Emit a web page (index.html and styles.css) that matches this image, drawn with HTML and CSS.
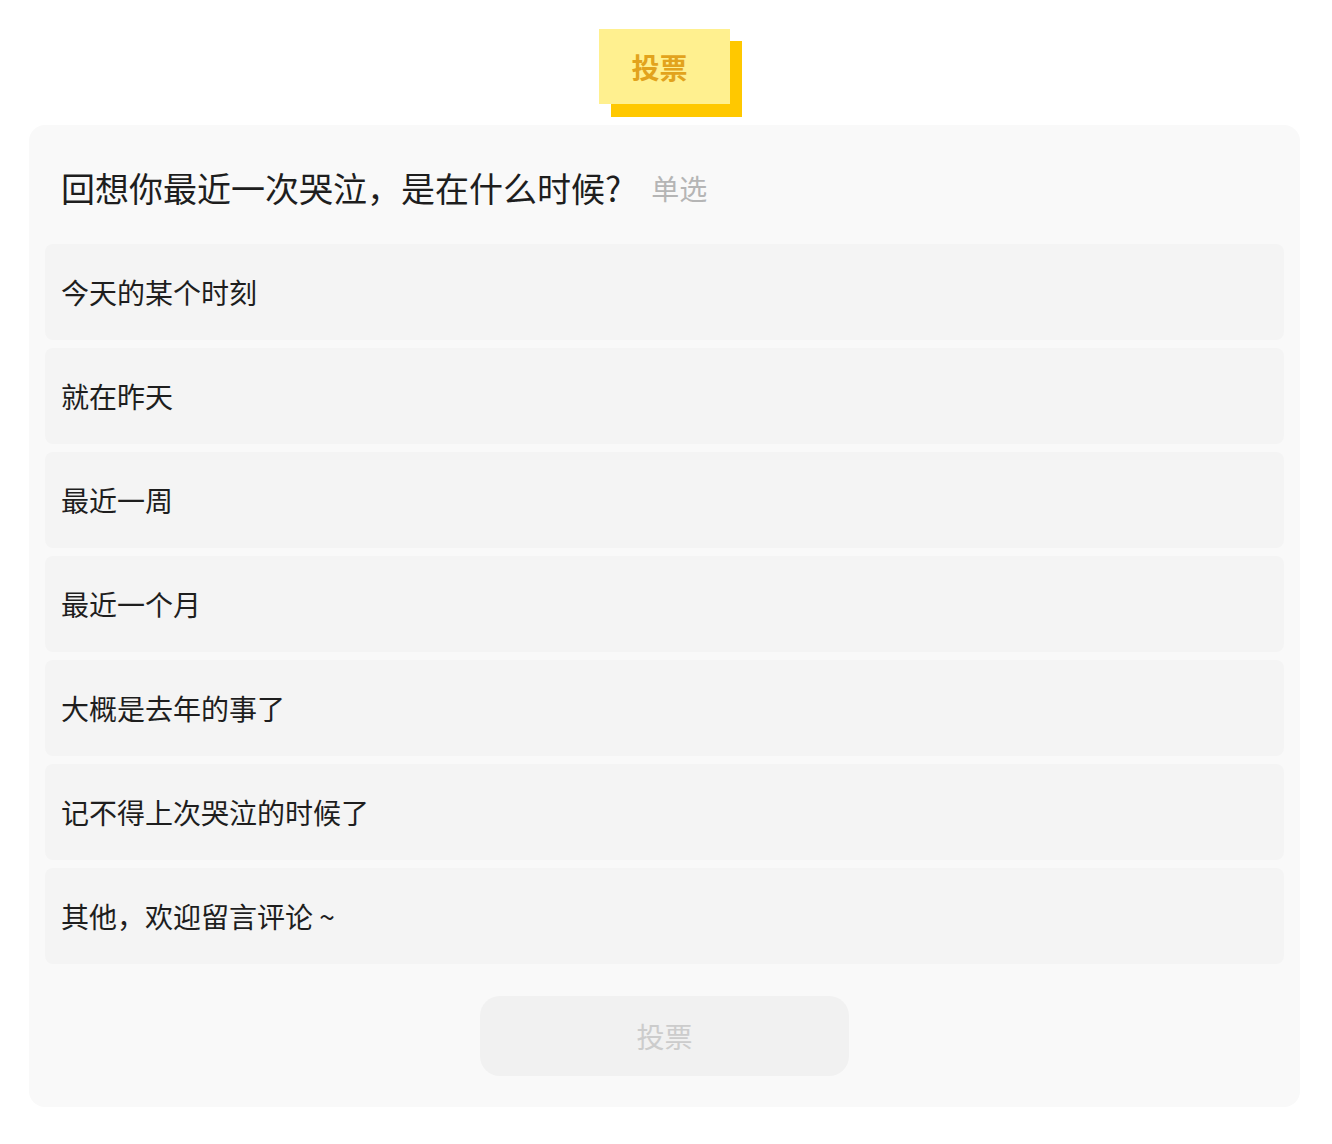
FILE: index.html
```html
<!DOCTYPE html>
<html lang="zh">
<head>
<meta charset="utf-8">
<link rel="stylesheet" href="styles.css">
</head>
<body>
<div class="page">
  <div class="tag-wrap">
    <div class="tag-shadow"></div>
    <div class="tag">投票</div>
  </div>
  <div class="card">
    <div class="title">
      <span class="q">回想你最近一次哭泣，是在什么时候?</span>
      <span class="kind">单选</span>
    </div>
    <div class="options">
      <div class="opt">今天的某个时刻</div>
      <div class="opt">就在昨天</div>
      <div class="opt">最近一周</div>
      <div class="opt">最近一个月</div>
      <div class="opt">大概是去年的事了</div>
      <div class="opt">记不得上次哭泣的时候了</div>
      <div class="opt">其他，欢迎留言评论 ~</div>
    </div>
    <div class="btn-row">
      <div class="btn">投票</div>
    </div>
  </div>
</div>
</body>
</html>
```
FILE: styles.css
```css
html, body {
  margin: 0;
  padding: 0;
  background: #ffffff;
}
body {
  font-family: "Noto Sans CJK SC", "Noto Sans", sans-serif;
  color: #1e1e1e;
}
.page {
  width: 1332px;
  padding-top: 29px;
  display: flex;
  flex-direction: column;
  align-items: center;
}
.tag-wrap {
  position: relative;
  width: 143px;
  height: 88px;
  margin-left: 9px;
}
.tag-shadow {
  position: absolute;
  left: 12px;
  top: 12px;
  width: 131px;
  height: 76px;
  background: #ffc800;
}
.tag {
  position: absolute;
  left: 0;
  top: 0;
  width: 131px;
  height: 75px;
  background: #fff08f;
  color: #e2a31d;
  font-size: 28px;
  font-weight: 700;
  display: flex;
  align-items: center;
  justify-content: center;
  box-sizing: border-box;
  padding-right: 10px;
}
.card {
  margin-top: 8px;
  width: 1271px;
  margin-left: -3px;
  box-sizing: border-box;
  background: #f9f9f9;
  border-radius: 16px;
  padding: 0 16px 31px;
}
.title {
  display: flex;
  align-items: center;
  height: 119px;
  padding-left: 16px;
  padding-top: 6px;
  box-sizing: border-box;
}
.q {
  font-size: 34px;
  color: #1e1e1e;
}
.kind {
  font-size: 28px;
  color: #b5b5b5;
  margin-left: 30px;
}
.options {
  display: flex;
  flex-direction: column;
  gap: 8px;
}
.opt {
  height: 96px;
  background: #f4f4f4;
  border-radius: 8px;
  display: flex;
  align-items: center;
  padding-left: 16px;
  font-size: 28px;
  color: #1e1e1e;
}
.btn-row {
  display: flex;
  justify-content: center;
  margin-top: 32px;
}
.btn {
  width: 369px;
  height: 80px;
  border-radius: 20px;
  background: #f1f1f1;
  color: #cccccc;
  font-size: 28px;
  display: flex;
  align-items: center;
  justify-content: center;
}
```
